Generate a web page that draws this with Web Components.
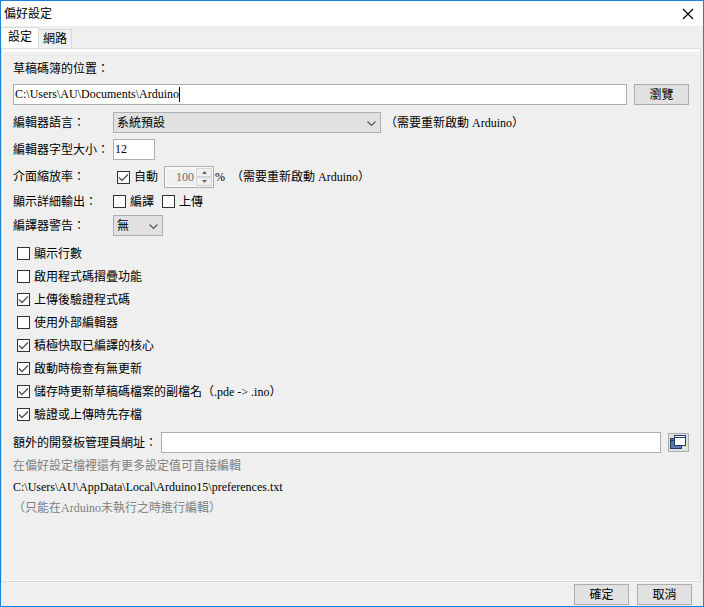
<!DOCTYPE html>
<html lang="zh-Hant">
  <head>
    <meta charset="utf-8">
    <title>偏好設定</title>
    <style>
      html, body { height: 100%; margin: 0; }
      body {
        font: 12px/18px "Liberation Serif", "Noto Sans CJK TC", serif;
        color: #000;
        --line: #adadb3;
        --face: #e1e1e1;
        --bg: #efefef;
      }
    </style>
  </head>

  <body>
    <pref-dialog heading="偏好設定">
      <tab-strip slot="tabs" tabs="設定,網路"></tab-strip>

      <text-field stacked label="草稿碼簿的位置：" value="C:\Users\AU\Documents\Arduino" caret>
        <push-button>瀏覽</push-button>
      </text-field>

      <select-field label="編輯器語言：" value="系統預設" size="268">（需要重新啟動 Arduino）</select-field>
      <text-field label="編輯器字型大小：" value="12" size="42"></text-field>
      <field-group label="介面縮放率：">
        <check-box checked inset>自動</check-box>
        <spin-box value="100" label="介面縮放率" disabled>%</spin-box>
        <span>（需要重新啟動 Arduino）</span>
      </field-group>
      <field-group label="顯示詳細輸出：" compact>
        <check-box>編譯</check-box>
        <check-box>上傳</check-box>
      </field-group>
      <select-field label="編譯器警告：" value="無" size="50"></select-field>

      <check-list>
        <check-box>顯示行數</check-box>
        <check-box>啟用程式碼摺疊功能</check-box>
        <check-box checked>上傳後驗證程式碼</check-box>
        <check-box>使用外部編輯器</check-box>
        <check-box checked>積極快取已編譯的核心</check-box>
        <check-box checked>啟動時檢查有無更新</check-box>
        <check-box checked>儲存時更新草稿碼檔案的副檔名（.pde -&gt; .ino）</check-box>
        <check-box checked>驗證或上傳時先存檔</check-box>
      </check-list>

      <text-field auto label="額外的開發板管理員網址：" value="">
        <push-button icon label="開啟網址清單">
          <svg width="17" height="15" viewBox="0 0 17 15" shape-rendering="crispEdges" style="display:block">
            <rect x="0.5" y="3.5" width="11" height="10" fill="#5b78ae" stroke="#243a6b"/>
            <path d="M1 5.5h4" stroke="#243a6b"/>
            <rect x="4.5" y="0.5" width="11" height="10" fill="#fff" stroke="#243a6b"/>
            <path d="M5 2.5h10" stroke="#243a6b"/>
          </svg>
        </push-button>
      </text-field>

      <pref-notes>
        <span>在偏好設定檔裡還有更多設定值可直接編輯</span>
        <span style="color:#000">C:\Users\AU\AppData\Local\Arduino15\preferences.txt</span>
        <span>（只能在Arduino未執行之時進行編輯）</span>
      </pref-notes>

      <push-button slot="footer">確定</push-button>
      <push-button slot="footer">取消</push-button>
    </pref-dialog>

    <template id="dialog-template">
      <style>
        :host {
          display: flex; flex-direction: column;
          min-height: 100vh; box-sizing: border-box;
          border: 1px solid #1883d7; background: var(--bg);
        }
        header {
          display: flex; align-items: center; justify-content: space-between;
          height: 25px; padding: 0 9px 0 3px; background: #fff;
        }
        h1 { margin: 0; font: inherit; }
        .close { width: 12px; height: 12px; padding: 0; border: 0; background: none; }
        .close svg { display: block; }
        main {
          flex: 1; display: flex; flex-direction: column; gap: 6px;
          margin-right: 2px; padding: 11px 11px 0 11px;
          border: 1px solid #dcdcdc;
          box-shadow: inset 0 3px #fff, inset 1px -1px #fff;
        }
        footer { display: flex; justify-content: flex-end; gap: 8px; padding: 2px 11px 1px; }
      </style>
      <header>
        <h1></h1>
        <button class="close" aria-label="關閉">
          <svg width="12" height="12" viewBox="0 0 12 12"><path d="M1 1l10 10M11 1L1 11" stroke="#000" stroke-width="1.2"/></svg>
        </button>
      </header>
      <slot name="tabs"></slot>
      <main><slot></slot></main>
      <footer><slot name="footer"></slot></footer>
    </template>

    <template id="check-template">
      <style>
        :host { display: block; }
        :host([inset]) { padding-left: 4px; }
        label { display: flex; align-items: center; gap: 4px; }
        .box { display: grid; width: 13px; height: 13px; }
        input {
          grid-area: 1 / 1; appearance: none; margin: 0;
          width: 13px; height: 13px; border: 1px solid #333; background: #fff;
        }
        svg { grid-area: 1 / 1; visibility: hidden; pointer-events: none; }
        input:checked + svg { visibility: visible; }
      </style>
      <label>
        <span class="box">
          <input type="checkbox">
          <svg width="13" height="13" viewBox="0 0 13 13"><path d="M2 6.5l3 3 6-6" fill="none" stroke="#555" stroke-width="1.4"/></svg>
        </span>
        <slot></slot>
      </label>
    </template>

    <script>
      const fieldStyle = `
        :host { display: flex; align-items: center; }
        .caption { width: 100px; flex: none; }
        input, select {
          box-sizing: border-box; height: 21px; margin: 0;
          border: 1px solid var(--line); border-radius: 0;
          background: #fff; color: inherit; font: inherit; outline: 0;
        }
        input { padding: 0 1px; }
      `;

      class PrefDialog extends HTMLElement {
        connectedCallback() {
          const root = this.attachShadow({ mode: 'open' });
          root.append(document.querySelector('#dialog-template').content.cloneNode(true));
          root.querySelector('h1').textContent = this.getAttribute('heading');
        }
      }

      class TabStrip extends HTMLElement {
        connectedCallback() {
          const names = this.getAttribute('tabs').split(',');
          this.attachShadow({ mode: 'open' }).innerHTML = `
            <style>
              :host { display: block; padding-left: 1px; }
              div { display: flex; align-items: flex-end; height: 22px; }
              button {
                box-sizing: border-box; height: 19px; padding: 0 4px;
                border: 1px solid #d9d9d9; border-width: 1px 1px 0 0;
                background: #f0f0f0; color: inherit; font: inherit;
              }
              button[aria-selected=true] { height: 21px; padding: 0 6px 2px; background: #fff; }
            </style>
            <div role="tablist">
              ${names.map((n, i) => `<button role="tab" aria-selected="${i === 0}">${n}</button>`).join('')}
            </div>`;
        }
      }

      class TextField extends HTMLElement {
        connectedCallback() {
          const size = this.getAttribute('size');
          this.attachShadow({ mode: 'open' }).innerHTML = `
            <style>
              ${fieldStyle}
              :host([stacked]) { flex-wrap: wrap; row-gap: 6px; margin-bottom: 1px; }
              :host([stacked]) .caption { width: 100%; }
              :host([auto]) .caption { width: auto; padding-right: 4px; }
              .box { flex: 1; display: grid; margin-right: 7px; }
              .box.sized { flex: none; margin: 0; }
              input { grid-area: 1 / 1; width: 100%; min-width: 0; }
              /* text cursor: an invisible copy of the value pushes it to the end */
              .caret {
                grid-area: 1 / 1; justify-self: start; align-self: center;
                height: 15px; line-height: 15px; margin-left: 2px;
                border-right: 1px solid #000; color: transparent; pointer-events: none;
              }
              .caret::before { content: attr(data-value); }
            </style>
            <label class="caption" for="input">${this.getAttribute('label')}</label>
            <span class="box ${size ? 'sized' : ''}" ${size ? `style="width:${size}px"` : ''}>
              <input id="input" type="text">
              ${this.hasAttribute('caret') ? '<span class="caret"></span>' : ''}
            </span>
            <slot></slot>`;
          const value = this.getAttribute('value');
          this.shadowRoot.querySelector('input').value = value;
          const caret = this.shadowRoot.querySelector('.caret');
          if (caret) caret.dataset.value = value;
        }
      }

      class SelectField extends HTMLElement {
        connectedCallback() {
          this.attachShadow({ mode: 'open' }).innerHTML = `
            <style>
              ${fieldStyle}
              .box { display: grid; margin-right: 4px; width: ${this.getAttribute('size')}px; }
              select { grid-area: 1 / 1; appearance: none; padding: 0 20px 0 3px; background: var(--face); }
              svg { grid-area: 1 / 1; place-self: center end; margin: 2px 5px 0 0; pointer-events: none; }
            </style>
            <label class="caption" for="select">${this.getAttribute('label')}</label>
            <span class="box">
              <select id="select"><option>${this.getAttribute('value')}</option></select>
              <svg width="9" height="6" viewBox="0 0 9 6"><path d="M.5 .5l4 4 4-4" fill="none" stroke="#555" stroke-width="1.2"/></svg>
            </span>
            <slot></slot>`;
        }
      }

      class SpinBox extends HTMLElement {
        connectedCallback() {
          const off = this.hasAttribute('disabled') ? 'disabled' : '';
          this.attachShadow({ mode: 'open' }).innerHTML = `
            <style>
              :host { display: flex; align-items: center; gap: 1px; }
              .box {
                box-sizing: border-box; display: flex; width: 50px; height: 22px; padding: 1px;
                border: 1px solid var(--line); background: #f8f8f8;
              }
              input {
                flex: 1; min-width: 0; margin: 1px; padding: 0 1px 0 0; border: 0;
                background: var(--bg); color: #6d6d6d; font: inherit; text-align: right;
              }
              .arrows { display: grid; grid-template-rows: 1fr 1fr; width: 16px; }
              button {
                display: grid; place-items: center; padding: 0;
                border: 1px solid #d4d4d4; background: #f0f0f0;
              }
              svg { display: block; }
            </style>
            <span class="box">
              <input type="text" value="${this.getAttribute('value')}" aria-label="${this.getAttribute('label')}" ${off}>
              <span class="arrows">
                <button ${off} aria-label="增加"><svg width="5" height="3"><path d="M0 3L2.5 0 5 3z" fill="#666"/></svg></button>
                <button ${off} aria-label="減少"><svg width="5" height="3"><path d="M0 0L2.5 3 5 0z" fill="#666"/></svg></button>
              </span>
            </span>
            <slot></slot>`;
        }
      }

      class CheckBox extends HTMLElement {
        connectedCallback() {
          const root = this.attachShadow({ mode: 'open' });
          root.append(document.querySelector('#check-template').content.cloneNode(true));
          root.querySelector('input').checked = this.hasAttribute('checked');
        }
      }

      class FieldGroup extends HTMLElement {
        connectedCallback() {
          this.attachShadow({ mode: 'open' }).innerHTML = `
            <style>
              ${fieldStyle}
              :host([compact]) { height: 15px; }
              .items { display: flex; align-items: center; gap: 6px; }
              :host([compact]) .items { gap: 8px; }
            </style>
            <span class="caption" id="caption">${this.getAttribute('label')}</span>
            <div class="items" role="group" aria-labelledby="caption"><slot></slot></div>`;
        }
      }

      class CheckList extends HTMLElement {
        connectedCallback() {
          this.attachShadow({ mode: 'open' }).innerHTML = `
            <style>
              :host { display: grid; grid-auto-rows: 23px; align-items: center; padding-left: 4px; }
            </style>
            <slot></slot>`;
        }
      }

      class PushButton extends HTMLElement {
        connectedCallback() {
          const label = this.getAttribute('label');
          this.attachShadow({ mode: 'open' }).innerHTML = `
            <style>
              :host { display: block; }
              button {
                display: block; box-sizing: border-box; width: 55px; height: 21px; padding: 0;
                border: 1px solid #adadad; background: var(--face); color: inherit; font: inherit;
              }
              :host([icon]) button { display: grid; place-items: center; width: 21px; height: 19px; }
            </style>
            <button type="button" ${label ? `aria-label="${label}"` : ''}><slot></slot></button>`;
        }
      }

      class PrefNotes extends HTMLElement {
        connectedCallback() {
          this.attachShadow({ mode: 'open' }).innerHTML = `
            <style>
              :host { display: grid; grid-auto-rows: 21px; align-items: center; margin-top: -4px; color: #808080; }
            </style>
            <slot></slot>`;
        }
      }

      customElements.define('pref-dialog', PrefDialog);
      customElements.define('tab-strip', TabStrip);
      customElements.define('text-field', TextField);
      customElements.define('select-field', SelectField);
      customElements.define('spin-box', SpinBox);
      customElements.define('check-box', CheckBox);
      customElements.define('field-group', FieldGroup);
      customElements.define('check-list', CheckList);
      customElements.define('push-button', PushButton);
      customElements.define('pref-notes', PrefNotes);
    </script>
  </body>
</html>
